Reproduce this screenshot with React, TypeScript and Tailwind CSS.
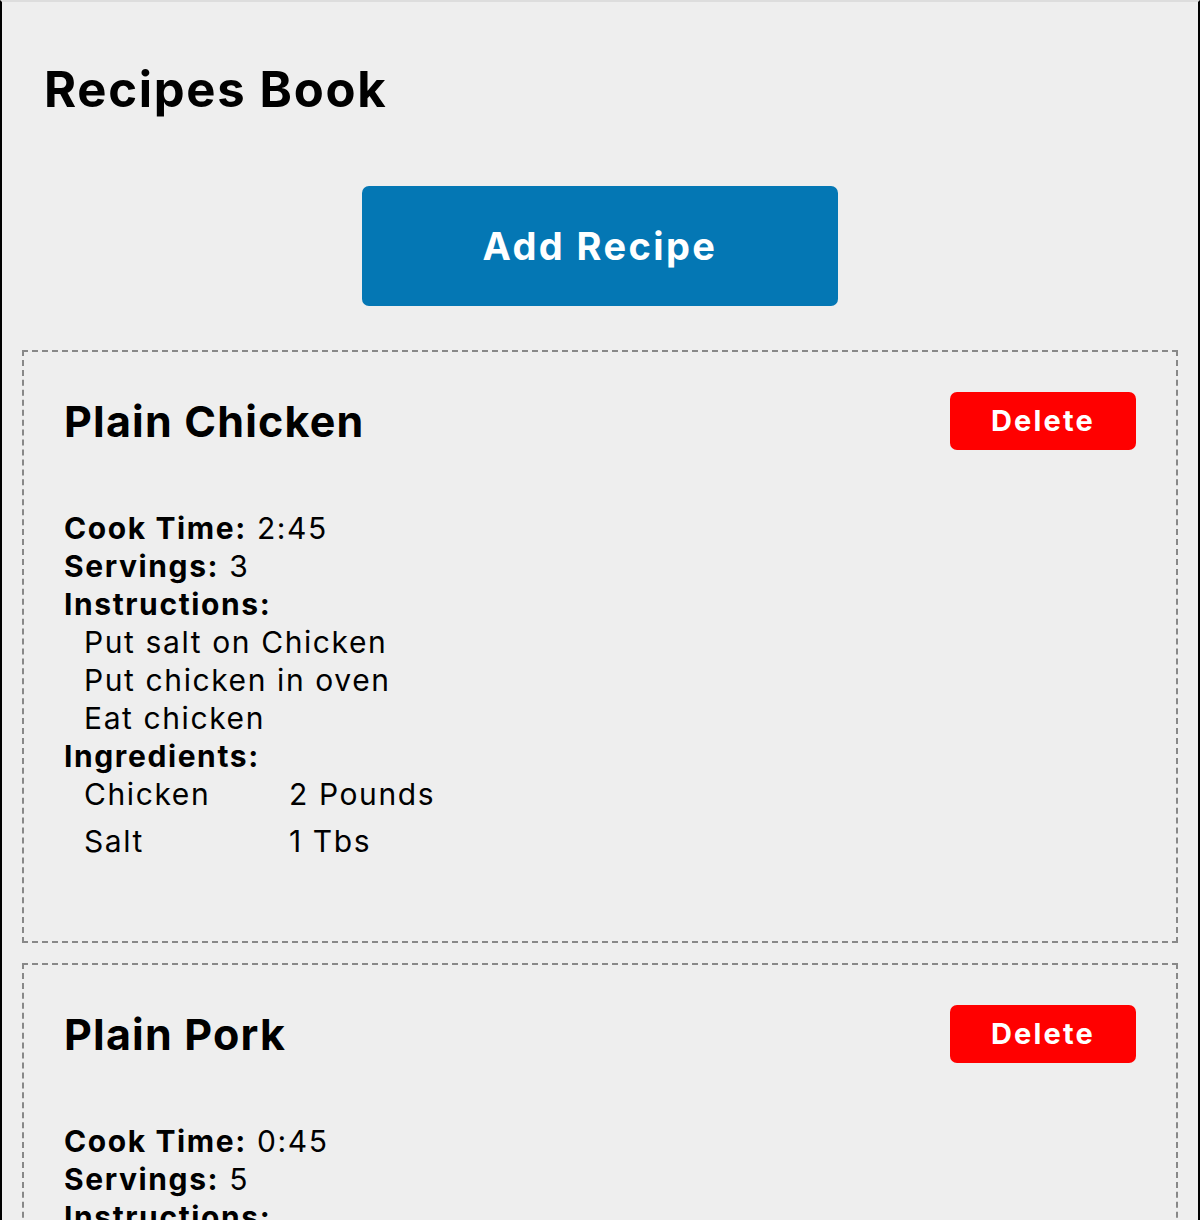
import React from "react";

type Recipe = {
  name: string;
  cookTime: string;
  servings: number;
  instructions: string[];
  ingredients: [string, string][];
};

const recipes: Recipe[] = [
  {
    name: "Plain Chicken",
    cookTime: "2:45",
    servings: 3,
    instructions: ["Put salt on Chicken", "Put chicken in oven", "Eat chicken"],
    ingredients: [
      ["Chicken", "2 Pounds"],
      ["Salt", "1 Tbs"],
    ],
  },
  {
    name: "Plain Pork",
    cookTime: "0:45",
    servings: 5,
    instructions: ["Put salt on Pork", "Put pork in oven", "Eat pork"],
    ingredients: [
      ["Pork", "2 Pounds"],
      ["Salt", "1 Tbs"],
    ],
  },
];

function RecipeCard({ r }: { r: Recipe }) {
  return (
    <div className="mx-5 border-2 border-dashed border-[#888888] px-10 pt-10 pb-[72px]">
      <div className="flex items-center justify-between">
        <h2 className="text-[43px] font-bold leading-[58px] tracking-[1.2px]">{r.name}</h2>
        <button className="w-[186px] h-[58px] rounded-[7px] bg-[#ff0000] text-white text-[29px] font-bold tracking-[2.2px]">
          Delete
        </button>
      </div>
      <div className="mt-[59px] text-[30px] leading-[38px] tracking-[1.6px]">
        <div>
          <span className="font-bold">Cook Time:</span> {r.cookTime}
        </div>
        <div>
          <span className="font-bold">Servings:</span> {r.servings}
        </div>
        <div className="font-bold">Instructions:</div>
        <div className="pl-5">
          {r.instructions.map((s) => (
            <div key={s}>{s}</div>
          ))}
        </div>
        <div className="font-bold">Ingredients:</div>
        <div className="pl-5">
          {r.ingredients.map(([n, a]) => (
            <div key={n} className="flex pb-[9px]">
              <div className="w-[205px]">{n}</div>
              <div>{a}</div>
            </div>
          ))}
        </div>
      </div>
    </div>
  );
}

export default function App() {
  return (
    <div
      className="w-[1200px] min-h-[1220px] bg-[#eeeeee] text-black border-t-2 border-t-[#dddddd] border-x-2 border-x-black"
      style={{ fontFamily: "Inter, 'Noto Sans', sans-serif" }}
    >
      <h1 className="pl-[42px] pt-[48px] text-[49px] font-bold leading-[80px] tracking-[1.7px]">Recipes Book</h1>
      <div className="mt-[56px] flex justify-center">
        <button className="w-[476px] h-[120px] rounded-[7px] bg-[#0477b4] text-white text-[38px] font-bold tracking-[2.4px]">
          Add Recipe
        </button>
      </div>
      <div className="mt-11 flex flex-col gap-5">
        {recipes.map((r) => (
          <RecipeCard key={r.name} r={r} />
        ))}
      </div>
    </div>
  );
}
